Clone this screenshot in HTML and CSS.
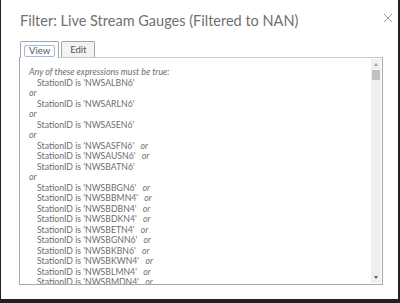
FILE: index.html
```html
<!DOCTYPE html>
<html lang="en">
  <head>
    <title>Filter</title>
    <meta charset="UTF-8">
    <link rel="stylesheet" href="styles.css">
  </head>
  <body>
    <div class="dialog">
        <div class="head">
            <h1 class="title">Filter: Live Stream Gauges (Filtered to NAN)</h1>
            <span class="close">
                <svg width="10" height="10" viewBox="0 0 10 10"><path d="M1 1L9 9M9 1L1 9" stroke="#9a9a9a" stroke-width="1"/></svg>
            </span>
        </div>
        <div class="tabs">
            <div class="tab active"><span class="focus">View</span></div>
            <div class="tab">Edit</div>
        </div>
        <div class="panel">
            <div class="list">
                <div class="it">Any of these expressions must be true:</div>
                <div class="ex">StationID is 'NWSALBN6'</div>
                <div class="it">or</div>
                <div class="ex">StationID is 'NWSARLN6'</div>
                <div class="it">or</div>
                <div class="ex">StationID is 'NWSASEN6'</div>
                <div class="it">or</div>
                <div class="ex">StationID is 'NWSASFN6' <i>or</i></div>
                <div class="ex">StationID is 'NWSAUSN6' <i>or</i></div>
                <div class="ex">StationID is 'NWSBATN6'</div>
                <div class="it">or</div>
                <div class="ex">StationID is 'NWSBBGN6' <i>or</i></div>
                <div class="ex">StationID is 'NWSBBMN4' <i>or</i></div>
                <div class="ex">StationID is 'NWSBDBN4' <i>or</i></div>
                <div class="ex">StationID is 'NWSBDKN4' <i>or</i></div>
                <div class="ex">StationID is 'NWSBETN4' <i>or</i></div>
                <div class="ex">StationID is 'NWSBGNN6' <i>or</i></div>
                <div class="ex">StationID is 'NWSBKBN6' <i>or</i></div>
                <div class="ex">StationID is 'NWSBKWN4' <i>or</i></div>
                <div class="ex">StationID is 'NWSBLMN4' <i>or</i></div>
                <div class="ex">StationID is 'NWSBMDN4' <i>or</i></div>
            </div>
            <div class="bar">
                <span class="arrow up"></span>
                <span class="thumb"></span>
                <span class="track"></span>
                <span class="arrow down"></span>
            </div>
        </div>
    </div>
  </body>
</html>
```

FILE: styles.css
```css
*{
    margin: 0;
    padding: 0;
    box-sizing: border-box;
}
html,body{width: 100%;height: 100%;}
body{
    background: #1f2124;
    font-family: Lato, "Liberation Sans", sans-serif;
    color: #6a6a6a;
    padding-left: 1px;
}
.dialog{
    width: 397px;
    height: 299px;
    background: #fff;
    padding: 10px 0 0 18px;
}
.head{
    display: flex;
    justify-content: space-between;
    height: 31px;
}
.title{
    font-size: 14.5px;
    font-weight: 400;
    color: #707070;
    line-height: 22px;
    padding-left: 1px;
}
.close{
    margin: -3px 5px 0 0;
}
.tabs{
    display: flex;
    gap: 2px;
    height: 16px;
    margin-left: 1px;
}
.tab{
    border: 1px solid #a5a5a5;
    border-bottom: none;
    border-radius: 2px 2px 0 0;
    font-size: 9.5px;
    line-height: 15px;
    padding: 0 8px;
    color: #555;
    background: #f3f3f3;
}
.tab.active{
    background: #fff;
    height: 17px;
    padding: 3px 3px 0;
    position: relative;
    z-index: 1;
}
.focus{
    display: block;
    border: 1px solid #9db9e6;
    border-radius: 2px;
    line-height: 10px;
    padding: 0 4px;
}
.panel{
    display: flex;
    width: 364px;
    height: 228px;
    border: 1px solid #a8a8a8;
    border-top-color: #c8c8c8;
}
.list{
    flex: 1;
    overflow: hidden;
    padding: 9px 0 0 9px;
    font-size: 8.7px;
    line-height: 10.5px;
    color: #6e6e6e;
}
.it, .ex i{
    font-style: italic;
}
.it{
    font-size: 8.9px;
}
.ex{
    padding-left: 8px;
    white-space: pre;
}
.ex i{
    padding-left: 4px;
}
.bar{
    width: 10px;
    margin: 1px 1px 1px 0;
    background: #f0f0f0;
    display: flex;
    flex-direction: column;
    align-items: center;
}
.arrow{
    width: 0;
    height: 0;
    border-left: 2.5px solid transparent;
    border-right: 2.5px solid transparent;
    margin: 4px 0;
}
.up{border-bottom: 3px solid #a0a0a0;}
.down{border-top: 3px solid #606060;}
.thumb{
    width: 8px;
    height: 10px;
    background: #c1c1c1;
}
.track{flex: 1;}
```
